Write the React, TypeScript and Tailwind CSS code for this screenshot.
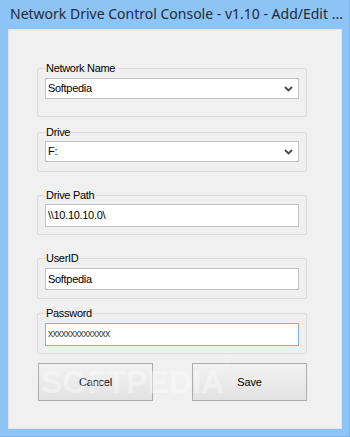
import React from 'react';

const ui = { fontFamily: '"Liberation Sans", Arial, sans-serif' };

interface GroupProps {
  label: string;
  className: string;
  children: React.ReactNode;
}

// WinForms style group box: light border, caption sitting on the top line
const GroupBox: React.FC<GroupProps> = ({ label, className, children }) => (
  <div className={`relative w-[270px] border border-[#dcdcdc] rounded-[2px] px-[7px] ${className}`}>
    <span className="absolute -top-[8px] left-[7px] bg-[#f0f0f0] px-[1px] text-[11px] leading-[14px] tracking-[-0.3px] text-black">
      {label}
    </span>
    {children}
  </div>
);

const Combo: React.FC<{ value: string }> = ({ value }) => (
  <div className="h-[21px] w-[254px] bg-white border border-[#c3c3c3] flex items-center justify-between pl-[2px] pr-[5px]">
    <span className="text-[11px] tracking-[-0.3px] text-black">{value}</span>
    <svg width="9" height="6" viewBox="0 0 9 6">
      <path d="M1 1 L4.5 4.5 L8 1" fill="none" stroke="#4a4a4a" strokeWidth="1.8" />
    </svg>
  </div>
);

const TextBox: React.FC<{ value: string; h: string; focused?: boolean; small?: boolean }> = ({ value, h, focused, small }) => (
  <div
    className={`${h} w-[254px] bg-white border flex pl-[2px] ${
      focused ? 'border-[#7fb4ea] items-start pt-[2px]' : 'border-[#c3c3c3] items-center'
    }`}
  >
    <span className={`${small ? 'text-[10px] tracking-[-0.6px] text-[#444]' : 'text-[11px] tracking-[-0.3px] text-black'}`}>{value}</span>
  </div>
);

const Btn: React.FC<{ label: string }> = ({ label }) => (
  <button className="relative z-10 h-[38px] w-[115px] border border-[#acacac] bg-gradient-to-b from-[#f2f2f2] to-[#e3e3e3] text-[11px] tracking-[-0.2px] text-black">
    {label}
  </button>
);

export default function App() {
  return (
    <div className="w-[350px] h-[437px] bg-[#8dc4f5] flex flex-col border-r border-b border-[#78b2e8]" style={ui}>
      <div
        className="h-[29px] shrink-0 pl-[10px] pt-[4px] text-[14px] leading-[20px] text-[#1f2b36] whitespace-nowrap"
        style={{ fontFamily: '"Noto Sans", "Open Sans", sans-serif' }}
      >
        Network Drive Control Console - v1.10 - Add/Edit ...
      </div>
      <div className="mx-[8px] w-[334px] h-[400px] bg-[#f0f0f0] border border-[#dfe6ee] flex flex-col pl-[28px] pt-[38px] relative">
        <GroupBox label="Network Name" className="h-[49px] pt-[9px]">
          <Combo value="Softpedia" />
        </GroupBox>
        <GroupBox label="Drive" className="h-[40px] pt-[8px] mt-[15px]">
          <Combo value="F:" />
        </GroupBox>
        <GroupBox label="Drive Path" className="h-[40px] pt-[8px] mt-[23px]">
          <TextBox value={'\\\\10.10.10.0\\'} h="h-[23px]" />
        </GroupBox>
        <GroupBox label="UserID" className="h-[41px] pt-[9px] mt-[23px]">
          <TextBox value="Softpedia" h="h-[22px]" />
        </GroupBox>
        <GroupBox label="Password" className="h-[41px] pt-[9px] mt-[14px]">
          <TextBox value="xxxxxxxxxxxxxx" h="h-[23px]" focused small />
        </GroupBox>
        <div className="flex gap-[39px] mt-[9px] pl-[1px]">
          <Btn label="Cancel" />
          <Btn label="Save" />
        </div>
        {/* faint watermark over the buttons */}
        <span className="absolute z-20 left-[32px] top-[336px] text-[32px] leading-[32px] font-bold text-white/40 pointer-events-none select-none">
          SOFTPEDIA<sup className="text-[8px] align-top">®</sup>
        </span>
      </div>
    </div>
  );
}
